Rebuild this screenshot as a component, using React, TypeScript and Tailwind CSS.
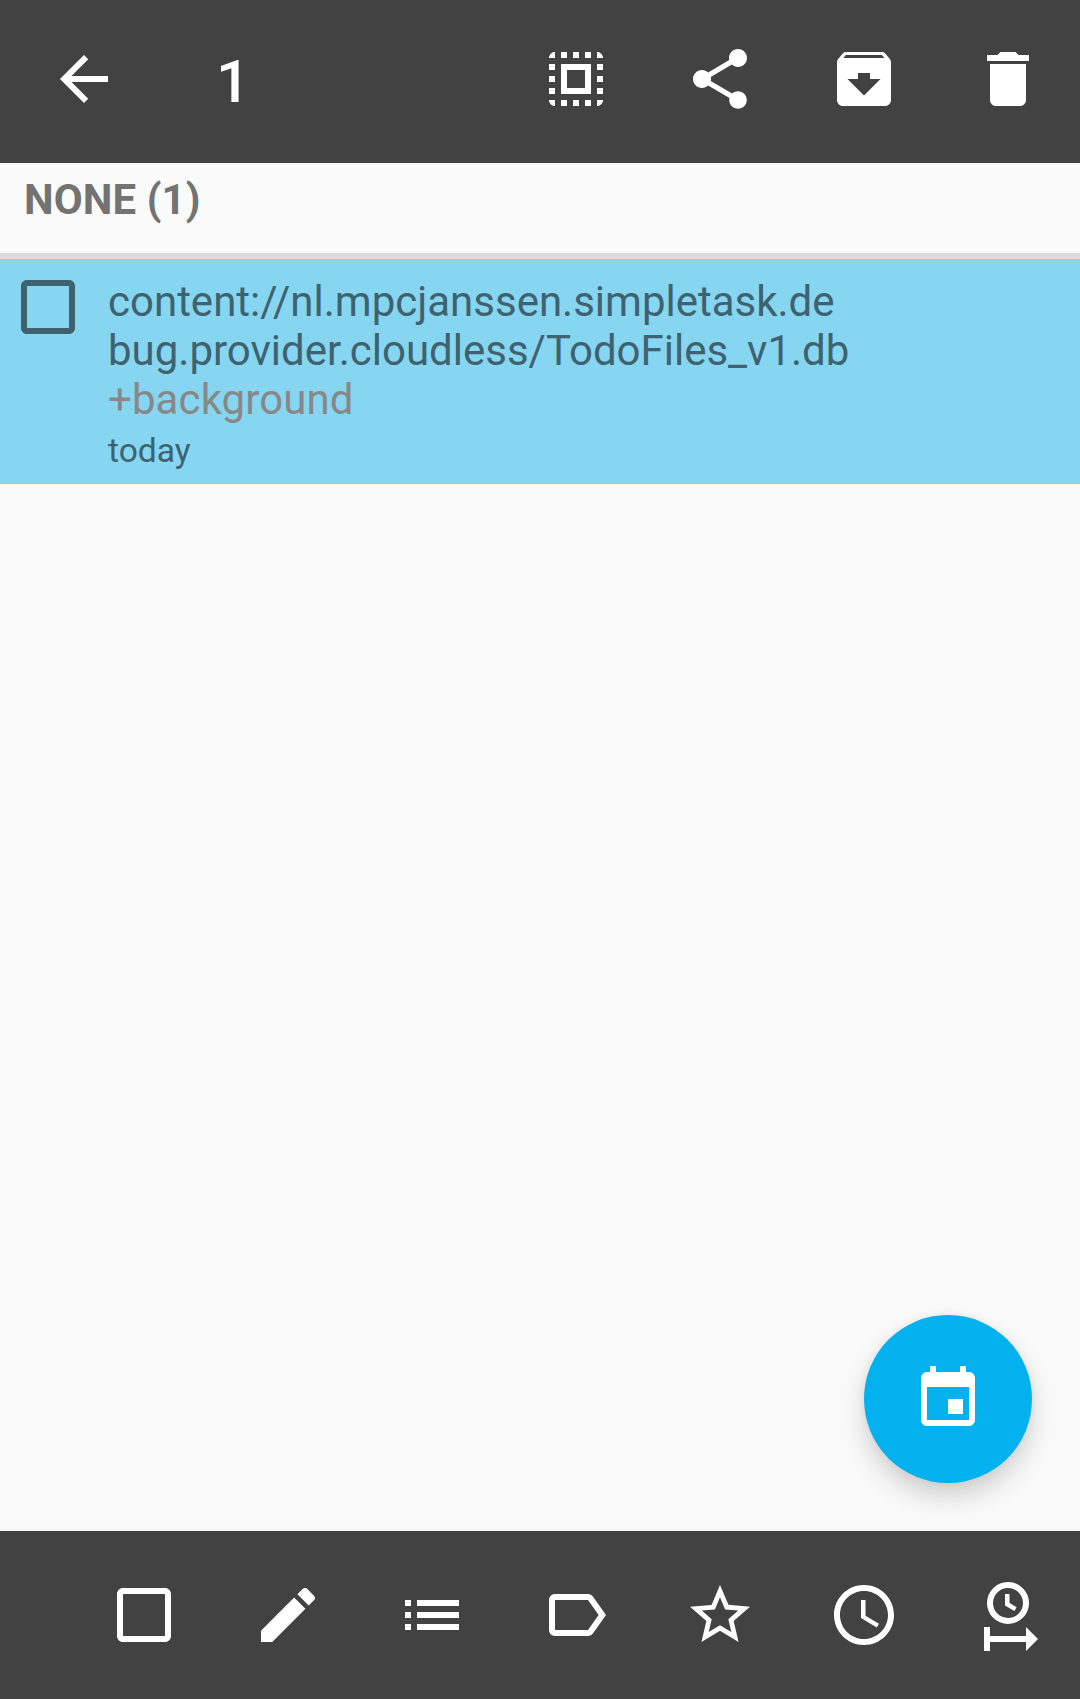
import React from "react";

const PATHS = {
  back: "M20 11H7.83l5.59-5.59L12 4l-8 8 8 8 1.41-1.41L7.83 13H20v-2z",
  selectAll:
    "M3 5h2V3c-1.1 0-2 .9-2 2zm0 8h2v-2H3v2zm4 8h2v-2H7v2zM3 9h2V7H3v2zm10-6h-2v2h2V3zm6 0v2h2c0-1.1-.9-2-2-2zM5 21v-2H3c0 1.1.9 2 2 2zm-2-4h2v-2H3v2zM9 3H7v2h2V3zm2 18h2v-2h-2v2zm8-8h2v-2h-2v2zm0 8c1.1 0 2-.9 2-2h-2v2zm0-12h2V7h-2v2zm0 8h2v-2h-2v2zm-4 4h2v-2h-2v2zm0-16h2V3h-2v2zM7 17h10V7H7v10zm2-8h6v6H9V9z",
  share:
    "M18 16.08c-.76 0-1.44.3-1.96.77L8.91 12.7c.05-.23.09-.46.09-.7s-.04-.47-.09-.7l7.05-4.11c.54.5 1.25.81 2.04.81 1.66 0 3-1.34 3-3s-1.34-3-3-3-3 1.34-3 3c0 .24.04.47.09.7L8.04 9.81C7.5 9.31 6.79 9 6 9c-1.66 0-3 1.34-3 3s1.34 3 3 3c.79 0 1.5-.31 2.04-.81l7.12 4.16c-.05.21-.08.43-.08.65 0 1.61 1.31 2.92 2.92 2.92s2.92-1.31 2.92-2.92-1.31-2.92-2.92-2.92z",
  archive:
    "M20.54 5.23l-1.39-1.68C18.88 3.21 18.47 3 18 3H6c-.47 0-.88.21-1.16.55L3.46 5.23C3.17 5.57 3 6.02 3 6.5V19c0 1.1.9 2 2 2h14c1.1 0 2-.9 2-2V6.5c0-.48-.17-.93-.46-1.27zM12 17.5L6.5 12H10v-2h4v2h3.5L12 17.5zM5.12 5l.81-1h12l.94 1H5.12z",
  trash: "M6 19c0 1.1.9 2 2 2h8c1.1 0 2-.9 2-2V7H6v12zM19 4h-3.5l-1-1h-5l-1 1H5v2h14V4z",
  box: "M19 5v14H5V5h14m0-2H5c-1.1 0-2 .9-2 2v14c0 1.1.9 2 2 2h14c1.1 0 2-.9 2-2V5c0-1.1-.9-2-2-2z",
  event:
    "M17 12h-5v5h5v-5zM16 1v2H8V1H6v2H5c-1.11 0-1.99.9-1.99 2L3 19c0 1.1.89 2 2 2h14c1.1 0 2-.9 2-2V5c0-1.1-.9-2-2-2h-1V1h-2zm3 18H5V8h14v11z",
  edit: "M3 17.25V21h3.75L17.81 9.94l-3.75-3.75L3 17.25zM20.71 7.04c.39-.39.39-1.02 0-1.41l-2.34-2.34c-.39-.39-1.02-.39-1.41 0l-1.83 1.83 3.75 3.75 1.83-1.83z",
  list: "M3 13h2v-2H3v2zm0 4h2v-2H3v2zm0-8h2V7H3v2zm4 4h14v-2H7v2zm0 4h14v-2H7v2zM7 7v2h14V7H7z",
  label:
    "M17.63 5.84C17.27 5.33 16.67 5 16 5L5 5.01C3.9 5.01 3 5.9 3 7v10c0 1.1.9 1.99 2 1.99L16 19c.67 0 1.27-.33 1.63-.84L22 12l-4.37-6.16zM16 17H5V7h11l3.55 5L16 17z",
  star: "M22 9.24l-7.19-.62L12 2 9.19 8.63 2 9.24l5.46 4.73L5.82 21 12 17.27 18.18 21l-1.63-7.03L22 9.24zM12 15.4l-3.76 2.27 1-4.28-3.32-2.88 4.38-.38L12 6.1l1.71 4.04 4.38.38-3.32 2.88 1 4.28L12 15.4z",
  clock:
    "M11.99 2C6.47 2 2 6.48 2 12s4.47 10 9.99 10C17.52 22 22 17.52 22 12S17.52 2 11.99 2zM12 20c-4.42 0-8-3.58-8-8s3.58-8 8-8 8 3.58 8 8-3.58 8-8 8zM12.5 7H11v6l5.25 3.15.75-1.23-4.5-2.67z",
};

type IconName = keyof typeof PATHS;

function Icon({ name }: { name: IconName }) {
  return (
    <svg viewBox="0 0 24 24" className="size-[72px] shrink-0 fill-current">
      <path d={PATHS[name]} />
    </svg>
  );
}

/** Clock above an arrow that starts from a bar: the threshold date action. */
function DeferIcon() {
  return (
    <svg viewBox="0 0 24 24" className="size-[72px] shrink-0 fill-current">
      <circle cx="12" cy="8" r="6" fill="none" stroke="currentColor" strokeWidth="2" />
      <path d="M11.75 5v3.4l2.75 1.65" fill="none" stroke="currentColor" strokeWidth="1.5" />
      <path d="M4 16h2v3h12v-3l4 4-4 4v-3H6v3H4z" />
    </svg>
  );
}

function Action({ label, children }: { label: string; children: React.ReactNode }) {
  return (
    <button aria-label={label} className="flex w-36 shrink-0 items-center justify-center">
      {children}
    </button>
  );
}

export default function App() {
  return (
    <div className="flex h-[1699px] w-[1080px] flex-col overflow-hidden bg-[#fafafa] font-['Roboto',sans-serif]">
      <header className="flex h-[163px] shrink-0 items-stretch bg-[#424242] pb-[5px] text-white">
        <button aria-label="Back" className="flex w-[168px] items-center justify-center">
          <Icon name="back" />
        </button>
        <h1 className="flex flex-1 items-center pt-[5px] pl-12 text-[60px] leading-none font-medium">1</h1>
        <Action label="Select all"><Icon name="selectAll" /></Action>
        <Action label="Share"><Icon name="share" /></Action>
        <Action label="Archive"><Icon name="archive" /></Action>
        <Action label="Delete"><Icon name="trash" /></Action>
      </header>

      <main className="relative flex-1">
        <h2 className="h-24 border-b-[6px] border-[#dbdbdb] pt-3 pl-6 text-[42px] leading-[50px] font-bold tracking-[0.1px] text-[#737373]">
          NONE (1)
        </h2>
        <div className="flex h-[225px] items-start bg-[#86d6f1] pt-3 pl-3 text-[#3e626f]">
          <Icon name="box" />
          <div className="ml-6 pt-1.5">
            <p className="text-[42px] leading-[49px]">
              content://nl.mpcjanssen.simpletask.de
              <br />
              bug.provider.cloudless/TodoFiles_v1.db
              <br />
              <span className="tracking-[0.1px] text-[#888888]">+background</span>
            </p>
            <p className="pt-[7px] text-[33.6px] leading-[40px]">today</p>
          </div>
        </div>
        <button
          aria-label="Calendar"
          className="absolute right-12 bottom-12 flex size-[168px] items-center justify-center rounded-full bg-[#03b1ef] text-white shadow-[0_14px_30px_-3px_rgba(0,0,0,0.2),0_0_10px_rgba(0,0,0,0.06)]"
        >
          <Icon name="event" />
        </button>
      </main>

      <nav className="flex h-[168px] shrink-0 items-center justify-end bg-[#424242] text-white">
        <Action label="Complete"><Icon name="box" /></Action>
        <Action label="Edit"><Icon name="edit" /></Action>
        <Action label="Lists"><Icon name="list" /></Action>
        <Action label="Tags"><Icon name="label" /></Action>
        <Action label="Priority"><Icon name="star" /></Action>
        <Action label="Due date"><Icon name="clock" /></Action>
        <Action label="Threshold date"><DeferIcon /></Action>
      </nav>
    </div>
  );
}
